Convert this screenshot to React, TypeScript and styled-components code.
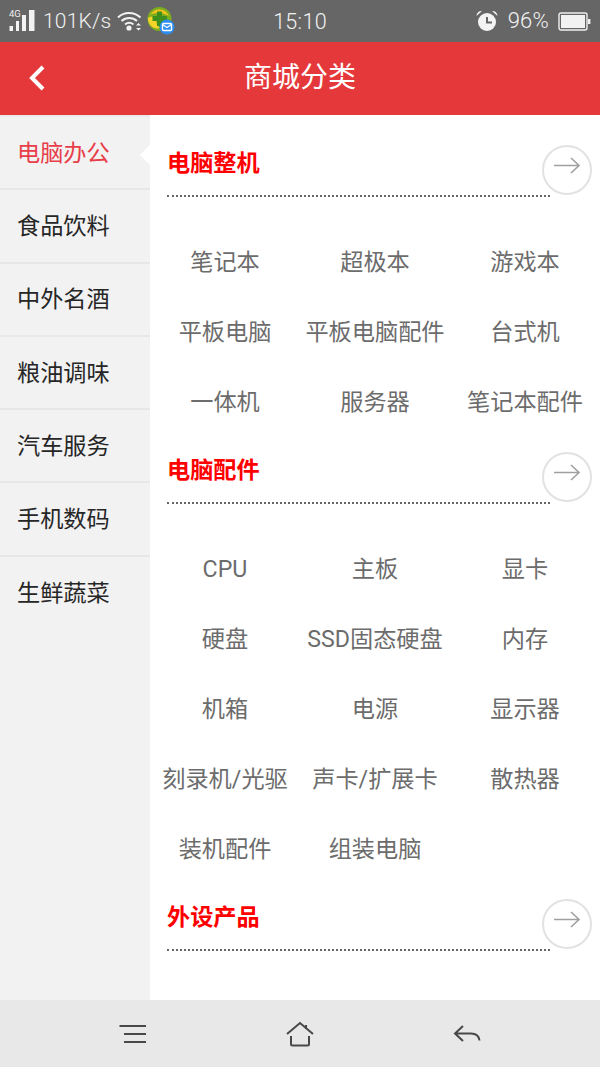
import React from "react";
import styled, { createGlobalStyle } from "styled-components";

const Global = createGlobalStyle`
  html, body { margin: 0; padding: 0; background: #fff; }
  #root { width: 600px; height: 1067px; }
  * { box-sizing: border-box; }
`;

const FONT = `Roboto, "Noto Sans CJK SC", sans-serif`;

const Page = styled.div`
  width: 600px; height: 1067px; display: flex; flex-direction: column;
  overflow: hidden; font-family: ${FONT};
`;
const StatusBar = styled.div`
  height: 42px; flex: none; background: #666; color: #f2f2f2; padding: 0 9px 0 9px;
  display: grid; grid-template-columns: 1fr auto 1fr; align-items: center;
`;
const StatusSide = styled.div<{ $end?: boolean }>`
  display: flex; align-items: center; justify-content: ${p => (p.$end ? "flex-end" : "flex-start")};
`;
const StatusText = styled.span<{ $ml?: number; $size?: number }>`
  font-size: ${p => p.$size ?? 21}px; font-weight: 300; line-height: 42px; margin-left: ${p => p.$ml ?? 0}px; letter-spacing: 0.2px;
`;
const Clock = styled.span`
  font-size: 21.5px; font-weight: 300; line-height: 42px; position: relative; top: 1px; letter-spacing: .3px;
`;
const Header = styled.header`
  height: 73px; flex: none; background: #e5383b; color: #fff; position: relative;
  display: flex; align-items: center; justify-content: center;
`;
const Title = styled.h1`
  margin: 0 0 8px; font-size: 28px; font-weight: 400; font-family: ${FONT};
`;
const BackButton = styled.div`
  position: absolute; left: 28px; top: 23px; width: 20px; height: 26px; display: flex;
`;
const Main = styled.main`
  flex: 1; min-height: 0; display: flex; overflow: hidden; background: #fff;
`;
const Sidebar = styled.nav`
  width: 150px; flex: none; background: #f2f2f2; display: flex; flex-direction: column; border-top: 2px solid #eaeaea;
`;
const SideItem = styled.div<{ $active?: boolean; $last?: boolean }>`
  height: 73.3px; flex: none; padding: 0 0 4px 17px; font-size: 23.2px; display: flex; align-items: center;
  color: ${p => (p.$active ? "#e83e4a" : "#262626")};
  border-bottom: ${p => (p.$last ? "none" : "2px solid #e7e7e7")};
  position: relative;
  ${p => p.$active ? `
    &::after {
      content: ""; position: absolute; right: 0; top: 28px;
      border-style: solid; border-width: 10px 10px 10px 0;
      border-color: transparent #fff transparent transparent;
    }` : ""}
`;
const Content = styled.div`
  flex: 1; min-width: 0; padding-top: 15px; display: flex; flex-direction: column;
`;
const Section = styled.section`
  display: flex; flex-direction: column;
`;
const SectionHead = styled.div`
  height: 97px; padding: 0 0 0 17px; position: relative;
`;
const SectionTitle = styled.div`
  height: 67px; width: 383px; padding-top: 17px; font-size: 23.2px; font-weight: 700; line-height: 32px; color: #f00;
  border-bottom: 2px dotted #666;
`;
const ArrowCircle = styled.div`
  position: absolute; right: 8px; top: 15px; width: 50px; height: 50px; display: flex;
`;
const ItemGrid = styled.div`
  display: grid; grid-template-columns: repeat(3, 150px); grid-auto-rows: 70px;
`;
const Item = styled.div`
  font-size: 23.2px; color: #6c6c6c; padding-bottom: 4px; display: flex; align-items: center; justify-content: center; white-space: pre;
`;
const LatinRun = styled.span`
  position: relative; top: 2px;
`;
const BottomBar = styled.footer`
  height: 67px; flex: none; background: #e8e8e8; display: grid; grid-template-columns: repeat(3, 1fr); padding: 0 50px 0 50px;
  align-items: center; justify-items: center;
`;
const NavIcon = styled.svg`
  display: block;
`;

const Signal = () => (
  <svg width="27" height="26" viewBox="0 0 27 26" style={{ display: "block" }}>
    <text x="0" y="9" fontSize="9.5" fontFamily="Roboto" fill="#eee">4G</text>
    <rect x="0.5" y="18" width="3.5" height="5" fill="#f2f2f2" />
    <rect x="7" y="13" width="3" height="10" fill="#f2f2f2" />
    <rect x="13" y="7" width="4" height="16" fill="#f2f2f2" />
    <rect x="20" y="2" width="5.5" height="21" fill="#f2f2f2" />
  </svg>
);
const Wifi = () => (
  <svg width="26" height="22" viewBox="0 0 26 22" fill="none" stroke="#f2f2f2" strokeWidth="2" style={{ display: "block", marginLeft: 6 }}>
    <path d="M1 7.5C7 1.5 17 1.5 23.5 7.5" />
    <path d="M4.5 11C9 7 15.5 7 20 11" />
    <path d="M8 14.5C10.5 12.5 14 12.5 16.5 14.5" />
    <circle cx="12" cy="18" r="2.6" fill="#f2f2f2" stroke="none" />
    <path d="M19 15.5h5l-2.5-2.5zM19 18h5l-2.5 2.5z" fill="#f2f2f2" stroke="none" />
  </svg>
);
const Guard = () => (
  <svg width="28" height="28" viewBox="0 0 28 28" style={{ display: "block", marginLeft: 4 }}>
    <circle cx="12.5" cy="12" r="12" fill="#7cae1e" />
    <path d="M3 8a10.5 10.5 0 0 1 19 1c-4-2-7-3-9-3S6 6 3 8z" fill="#f2c21b" />
    <path d="M1 11c3-2 7-2 8 0s-1 6 4 10c-6 2-12-3-12-10z" fill="#f4d32a" />
    <path d="M10 4.5h5v4.5h5v5h-5v5h-5v-5H5.5V9H10z" fill="#3f8f1c" />
    <circle cx="20" cy="20" r="7.5" fill="#2a8df2" />
    <rect x="15.5" y="16.5" width="9" height="7" rx="1" fill="none" stroke="#fff" strokeWidth="1.4" />
    <path d="M15.5 17.5l4.5 3 4.5-3" fill="none" stroke="#fff" strokeWidth="1.2" />
  </svg>
);
const Alarm = () => (
  <svg width="22" height="22" viewBox="0 0 22 22" style={{ display: "block" }}>
    <circle cx="11" cy="12" r="9" fill="#f4f4f4" />
    <path d="M0.5 6A5 5 0 0 1 6 1zM21.5 6A5 5 0 0 0 16 1z" fill="#f4f4f4" />
    <path d="M11 7v5.5h5" fill="none" stroke="#666" strokeWidth="2" />
  </svg>
);
const Battery = () => (
  <svg width="33" height="19" viewBox="0 0 33 19" style={{ display: "block", marginLeft: 9 }}>
    <rect x="1" y="1" width="28" height="17" rx="2" fill="none" stroke="#f0f0f0" strokeWidth="1.4" />
    <rect x="3" y="3" width="24" height="13" fill="#f2f2f2" />
    <rect x="30" y="7" width="2.4" height="5" fill="#f0f0f0" />
  </svg>
);
const Arrow = () => (
  <svg width="50" height="50" viewBox="0 0 50 50" fill="none">
    <circle cx="25" cy="25" r="24" stroke="#e2e2e2" strokeWidth="2" />
    <path d="M12 20.5H37M29 13l8 7.5-8 7.5" stroke="#a0a0a0" strokeWidth="1.6" />
  </svg>
);

const sections = [
  { title: "电脑整机", items: ["笔记本", "超极本", "游戏本", "平板电脑", "平板电脑配件", "台式机", "一体机", "服务器", "笔记本配件"] },
  { title: "电脑配件", items: ["CPU", "主板", "显卡", "硬盘", "SSD固态硬盘", "内存", "机箱", "电源", "显示器", "刻录机/光驱", "声卡/扩展卡", "散热器", "装机配件", "组装电脑"] },
  { title: "外设产品", items: [] as string[] },
];
const menu = ["电脑办公", "食品饮料", "中外名酒", "粮油调味", "汽车服务", "手机数码", "生鲜蔬菜"];

const renderItem = (text: string) =>
  text.split(/([A-Za-z/]+)/).filter(Boolean).map((run, i) =>
    /^[A-Za-z/]+$/.test(run) ? <LatinRun key={i}>{run}</LatinRun> : <span key={i}>{run}</span>
  );

export default function App() {
  return (
    <Page>
      <Global />
      <StatusBar>
        <StatusSide>
          <Signal />
          <StatusText $ml={7}>101K/s</StatusText>
          <Wifi />
          <Guard />
        </StatusSide>
        <Clock>15:10</Clock>
        <StatusSide $end>
          <Alarm />
          <StatusText $ml={10} $size={22}>96%</StatusText>
          <Battery />
        </StatusSide>
      </StatusBar>
      <Header>
        <BackButton>
          <svg width="20" height="26" viewBox="0 0 20 26" fill="none">
            <path d="M15 2 4 13l11 11" stroke="#fff" strokeWidth="4" />
          </svg>
        </BackButton>
        <Title>商城分类</Title>
      </Header>
      <Main>
        <Sidebar>
          {menu.map((m, i) => (
            <SideItem key={m} $active={i === 0} $last={i === menu.length - 1}>{m}</SideItem>
          ))}
        </Sidebar>
        <Content>
          {sections.map(s => (
            <Section key={s.title}>
              <SectionHead>
                <SectionTitle>{s.title}</SectionTitle>
                <ArrowCircle><Arrow /></ArrowCircle>
              </SectionHead>
              <ItemGrid>
                {s.items.map(it => <Item key={it}>{renderItem(it)}</Item>)}
              </ItemGrid>
            </Section>
          ))}
        </Content>
      </Main>
      <BottomBar>
        <NavIcon width="28" height="20" viewBox="0 0 28 20" fill="none" stroke="#484848" strokeWidth="2">
          <path d="M0.5 2H27M5 10H27M5 18H27" />
        </NavIcon>
        <NavIcon width="28" height="26" viewBox="0 0 28 26" fill="none" stroke="#484848" strokeWidth="2">
          <path d="M1 13 14 2l13 11M5 15v8q0 1.500 1.500 1.500h15q1.500 0 1.500-1.500v-8M20 4v4" />
        </NavIcon>
        <NavIcon width="28" height="20" viewBox="0 0 28 20" fill="none" stroke="#484848" strokeWidth="2">
          <path d="M10 2 2 9.500l8 7.500M2 9.500H18c5 0 8 3 8.500 7" />
        </NavIcon>
      </BottomBar>
    </Page>
  );
}
